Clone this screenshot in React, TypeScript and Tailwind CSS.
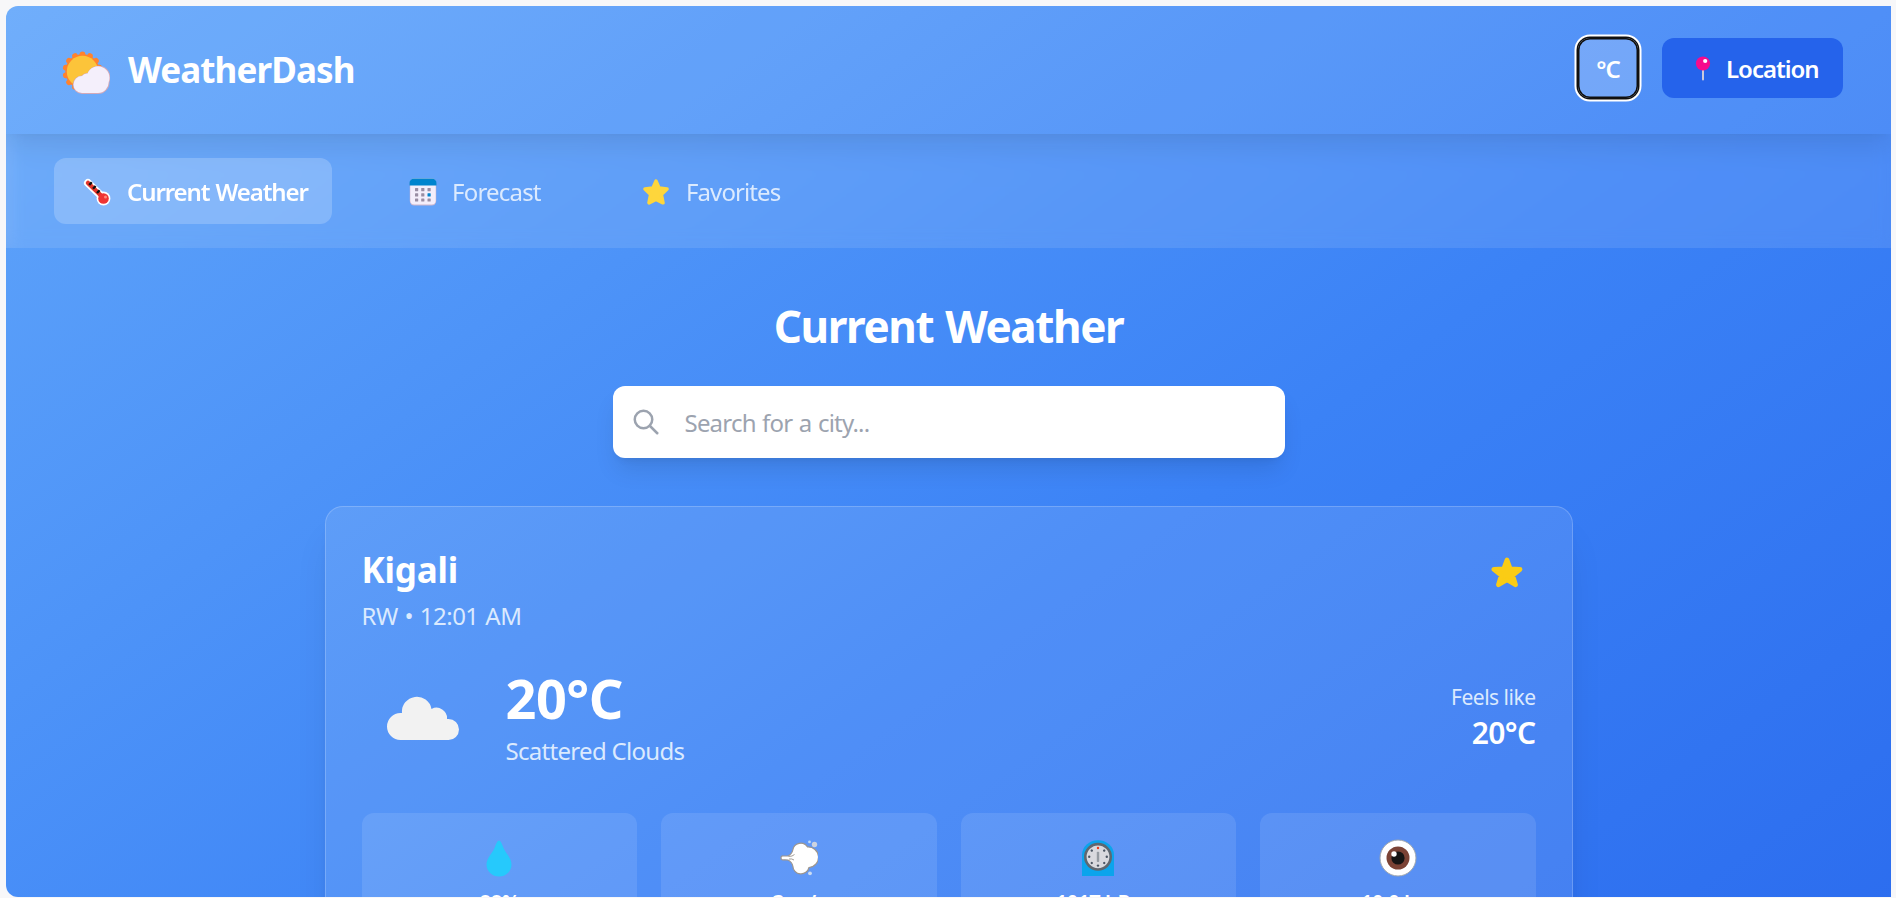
import React from "react";

function SunCloud() {
  return (
    <svg width="48" height="44" viewBox="0 0 48 44" className="shrink-0">
      <circle cx="20.500" cy="20.500" r="17.200" fill="#ff822d" />
      {Array.from({ length: 14 }, (_, i) => (
        <circle key={i} cx="20.500" cy="3.400" r="2.900" fill="#ff822d" transform={`rotate(${(i * 360) / 14} 20.500 20.500)`} />
      ))}
      <circle cx="20.500" cy="20.500" r="15.700" fill="#fcc43a" />
      <path d="M20 43 a9.200 9.200 0 0 1 0-18.400 a6 6 0 0 1 5.500-2.500 a11.300 11.300 0 0 1 22 9 a11.500 11.500 0 0 1-11.500 11.900z" fill="#d3a9b8" />
      <path d="M20 42 a8.500 8.500 0 0 1 0-17 a6 6 0 0 1 5.500-2.500 a10.800 10.800 0 0 1 21.200 8.500 a10.800 10.800 0 0 1-10.800 11z" fill="#f4effb" />
    </svg>
  );
}

function Thermometer() {
  return (
    <svg width="28" height="28" viewBox="0 0 28 28" className="shrink-0">
      <path d="M5 5 L20.500 20" stroke="#fff" strokeWidth="8" strokeLinecap="round" />
      <circle cx="20.500" cy="20.500" r="6.900" fill="#fff" />
      <path d="M5 5 L20 19.500" stroke="#e3352b" strokeWidth="4.500" strokeLinecap="round" />
      <circle cx="20.500" cy="20.500" r="5.300" fill="#ef3434" />
      <path d="M6.200 7 l2.600-2.800 M10 10.800 l2.600-2.800 M14 15 l2.600-2.800" stroke="#111" strokeWidth="2.400" />
      <circle cx="22.500" cy="19" r="1.500" fill="#ff8a7a" />
    </svg>
  );
}

function Calendar() {
  return (
    <svg width="28" height="28" viewBox="0 0 28 28" className="shrink-0">
      <rect x="0.800" y="0.500" width="26.400" height="27" rx="4.500" fill="#cdb5cb" />
      <rect x="1.300" y="0.500" width="25.400" height="26" rx="4" fill="#f3eefb" />
      <path d="M0.500 7.500 V5 a4.500 4.500 0 0 1 4.500-4.500 h18 a4.500 4.500 0 0 1 4.500 4.500 v2.500z" fill="#0084ce" />
      {[10, 15.3, 20.4].map((y) =>
        [6, 12.2, 18.5].map((x) => (
          <rect key={`${x}-${y}`} x={x} y={y} width="3.200" height="3.200" rx="0.500" fill={x === 18.5 && y === 15.3 ? "#0084ce" : "#998ea4"} />
        )),
      )}
    </svg>
  );
}

function Star({ size, color }: { size: number; color: string }) {
  return (
    <svg width={size} height={size} viewBox="0 0 28 28" className="shrink-0">
      <path
        d="M14 3.200 L17 10 L25 11 L19.300 16.400 L21 24.800 L14 21.400 L7 24.800 L8.700 16.400 L3 11 L11 10 Z"
        fill={color}
        stroke={color}
        strokeWidth="3.600"
        strokeLinejoin="round"
      />
    </svg>
  );
}

function SolidStar() {
  return (
    <svg width="32" height="31" viewBox="0 0 32 31" className="shrink-0">
      <path
        d="M16 3 L19.300 12 L29 12.300 L21.600 18.300 L24.500 27.800 L16 22.800 L7.500 27.800 L10.400 18.300 L3 12.300 L12.700 12 Z"
        fill="#facc15"
        stroke="#facc15"
        strokeWidth="4.800"
        strokeLinejoin="round"
      />
    </svg>
  );
}

function Pin() {
  return (
    <svg width="16" height="25" viewBox="0 0 16 25" className="shrink-0">
      <rect x="7" y="12" width="2" height="12.500" rx="1" fill="#c9c9dc" />
      <circle cx="8" cy="7.500" r="7.100" fill="#f70a8d" />
      <circle cx="10.200" cy="5" r="2.100" fill="#fff" />
    </svg>
  );
}

function Cloud() {
  return (
    <svg width="72" height="46" viewBox="0 0 72 46" className="shrink-0">
      <path d="M13.500 45 a13.500 13.500 0 0 1 0-27 h1.500 a14.900 14.900 0 0 1 29.500-4 a10.500 10.500 0 0 1 15.500 10 h1.500 a10.500 10.500 0 0 1 0 21z" fill="#f2f2f2" />
    </svg>
  );
}

function Droplet() {
  return (
    <svg width="26" height="37" viewBox="0 0 26 37">
      <path d="M13 0.500 C15 1 16 4 17.500 8 C19.500 13 25.500 18 25.500 24.500 A12.500 12 0 0 1 0.500 24.500 C0.500 18 6.500 13 8.500 8 C10 4 11 1 13 0.500Z" fill="#26c9fc" />
    </svg>
  );
}

function Wind() {
  return (
    <svg width="38" height="36" viewBox="0 0 38 36">
      <path d="M1 17.800 Q1 15.800 3 15.900 L8 16 Q12 14 12.800 10 A8 8 0 0 1 27.500 7 A10 10 0 0 1 29 27.500 A8.200 8.200 0 0 1 12.800 26 Q12 22 8 20 Q6 19.800 3 19.900 Q1 20 1 17.800Z" fill="#fff" stroke="#9d968f" strokeWidth="1.200" />
      <path d="M8.500 16.500 q4 0 6-2 M9 19 q3-0.500 5 1" fill="none" stroke="#8b8580" strokeWidth="0.800" />
      <circle cx="34.500" cy="4.500" r="2.700" fill="#ccd3e0" />
      <circle cx="29.500" cy="1.900" r="1.400" fill="#c0dcf5" />
      <circle cx="30" cy="33.300" r="1.900" fill="#cbdcf2" />
    </svg>
  );
}

function Gauge() {
  return (
    <svg width="34" height="37" viewBox="0 0 34 37">
      <path d="M1 36 V15 A16 14.800 0 0 1 33 15 V36 Z" fill="#0ba4ec" />
      <circle cx="17" cy="16.800" r="12.700" fill="#d9d9de" stroke="#5f6770" strokeWidth="2.600" />
      {Array.from({ length: 8 }, (_, i) => (
        <circle key={i} cx="17" cy="8" r="1.200" fill={i === 0 ? "#f03a17" : "#4b5563"} transform={`rotate(${i * 45} 17 16.800)`} />
      ))}
      <rect x="15.800" y="11.800" width="2.400" height="10.200" rx="0.800" fill="#969ba2" />
    </svg>
  );
}

function Eye() {
  return (
    <svg width="38" height="38" viewBox="0 0 38 38">
      <circle cx="19" cy="19" r="18" fill="#fff" stroke="#9da5ae" strokeWidth="1" />
      <circle cx="19" cy="19" r="11.500" fill="#7b4335" />
      <circle cx="19" cy="19" r="6.600" fill="#161514" />
      <circle cx="15" cy="15" r="2.700" fill="#fff" />
    </svg>
  );
}

const metrics = [
  { icon: <Droplet />, value: "88%" },
  { icon: <Wind />, value: "3 m/s" },
  { icon: <Gauge />, value: "1017 hPa" },
  { icon: <Eye />, value: "10.0 km" },
];

export default function App() {
  return (
    <div className="h-[898px] w-[1896px] overflow-hidden bg-[#f7f7f9] pt-[6px] pr-[5px] pl-[6px] font-['Noto_Sans',sans-serif] text-2xl">
      <div className="h-[891px] overflow-hidden rounded-l-xl">
        <div className="flex h-[1350px] flex-col bg-linear-to-br/srgb from-[#60a5fa] via-[#3b82f6] to-[#2563eb] text-white">
          <header className="flex h-32 shrink-0 items-center justify-between bg-white/10 pr-12 pl-[56px] shadow-[0_15px_23px_-4px_rgba(0,0,0,0.1),0_6px_9px_-6px_rgba(0,0,0,0.08)]">
            <div className="flex items-center">
              <div className="pt-1.5">
                <SunCloud />
              </div>
              <h1 className="ml-[18px] text-[35px] font-bold tracking-[-0.9px]">WeatherDash</h1>
            </div>
            <div className="flex items-center gap-6 pb-1">
              <button className="flex h-[60px] w-[60px] items-center justify-center rounded-xl bg-white/20 pt-0.5 font-semibold shadow-[inset_0_0_0_1.5px_#101010,0_0_0_1.5px_#101010,0_0_0_3.5px_#fff]">
                <span className="tracking-[-1px]">°C</span>
              </button>
              <button className="flex h-[60px] w-[181px] items-center rounded-xl bg-[#2563eb] pl-[33px] font-semibold">
                <Pin />
                <span className="ml-[15px] pt-0.5 tracking-[-1px]">Location</span>
              </button>
            </div>
          </header>

          <nav className="flex h-[114px] shrink-0 items-center gap-12 bg-white/10 px-12 backdrop-blur-sm">
            <button className="flex h-[66px] w-[278px] items-center rounded-xl bg-white/20 pt-0.5 pl-[29px] font-semibold">
              <Thermometer />
              <span className="ml-[16px] tracking-[-1.1px] whitespace-nowrap [word-spacing:1px]">Current Weather</span>
            </button>
            <button className="flex h-[66px] w-[184px] items-center pt-0.5 pl-[29px] text-[#dbeafe]">
              <Calendar />
              <span className="ml-[15px] tracking-[-0.8px]">Forecast</span>
            </button>
            <button className="flex h-[66px] items-center pt-0.5 pl-[30px] text-[#dbeafe]">
              <Star size={28} color="#fed63c" />
              <span className="ml-[16px] tracking-[-0.9px]">Favorites</span>
            </button>
          </nav>

          <main className="flex flex-col items-center pt-12">
            <h2 className="h-[60px] text-[44px] leading-[60px] font-bold tracking-[-1.4px] [word-spacing:2px]">Current Weather</h2>
            <div className="mt-[30px] flex h-[72px] w-[672px] items-center rounded-xl bg-white pl-[18px] shadow-[0_15px_23px_-4px_rgba(0,0,0,0.1),0_6px_9px_-6px_rgba(0,0,0,0.1)]">
              <svg width="30" height="30" viewBox="0 0 24 24" fill="none" stroke="#9ca3af" strokeWidth="2" strokeLinecap="round" className="shrink-0">
                <circle cx="10" cy="10" r="7" />
                <path d="M21 21l-6-6" />
              </svg>
              <span className="ml-[24px] pt-0.5 tracking-[-0.8px] text-[#9ca3af] [word-spacing:1px]">Search for a city...</span>
            </div>

            <section className="mt-12 h-[600px] w-[1248px] rounded-[18px] border border-white/20 bg-white/10 p-9 shadow-[0_30px_38px_-8px_rgba(0,0,0,0.1),0_12px_15px_-9px_rgba(0,0,0,0.1)]">
              <div className="flex h-[90px] justify-between">
                <div>
                  <h3 className="h-[55px] text-[35px] leading-[54px] font-bold tracking-[-0.2px]">Kigali</h3>
                  <p className="leading-9 tracking-[-0.5px] text-[#dbeafe] [word-spacing:1px]">RW • 12:01 AM</p>
                </div>
                <div className="pt-[14px] pr-[13px]">
                  <SolidStar />
                </div>
              </div>

              <div className="mt-[30px] flex h-[114px] items-start justify-between">
                <div className="flex">
                  <div className="w-36 pt-[32px] pl-[25px]">
                    <Cloud />
                  </div>
                  <div className="pt-[5px]">
                    <div className="h-[60px] text-[54px] leading-[60px] font-bold tracking-[-0.5px]">20°C</div>
                    <div className="mt-[5px] leading-9 tracking-[-0.7px] text-[#dbeafe]">Scattered Clouds</div>
                  </div>
                </div>
                <div className="pt-[19px] text-right">
                  <div className="text-[21px] leading-[30px] tracking-[-0.5px] text-[#dbeafe]">Feels like</div>
                  <div className="text-[30px] leading-[42px] font-semibold tracking-[-0.6px]">20°C</div>
                </div>
              </div>

              <div className="mt-9 grid grid-cols-4 gap-6">
                {metrics.map((m) => (
                  <div key={m.value} className="flex h-[150px] flex-col items-center rounded-xl bg-white/10 pt-[25px]">
                    <div className="flex h-[40px] items-center">{m.icon}</div>
                    <div className="mt-[11px] text-[21px] leading-7 font-semibold tracking-[-0.8px]">{m.value}</div>
                  </div>
                ))}
              </div>
            </section>
          </main>
        </div>
      </div>
    </div>
  );
}
